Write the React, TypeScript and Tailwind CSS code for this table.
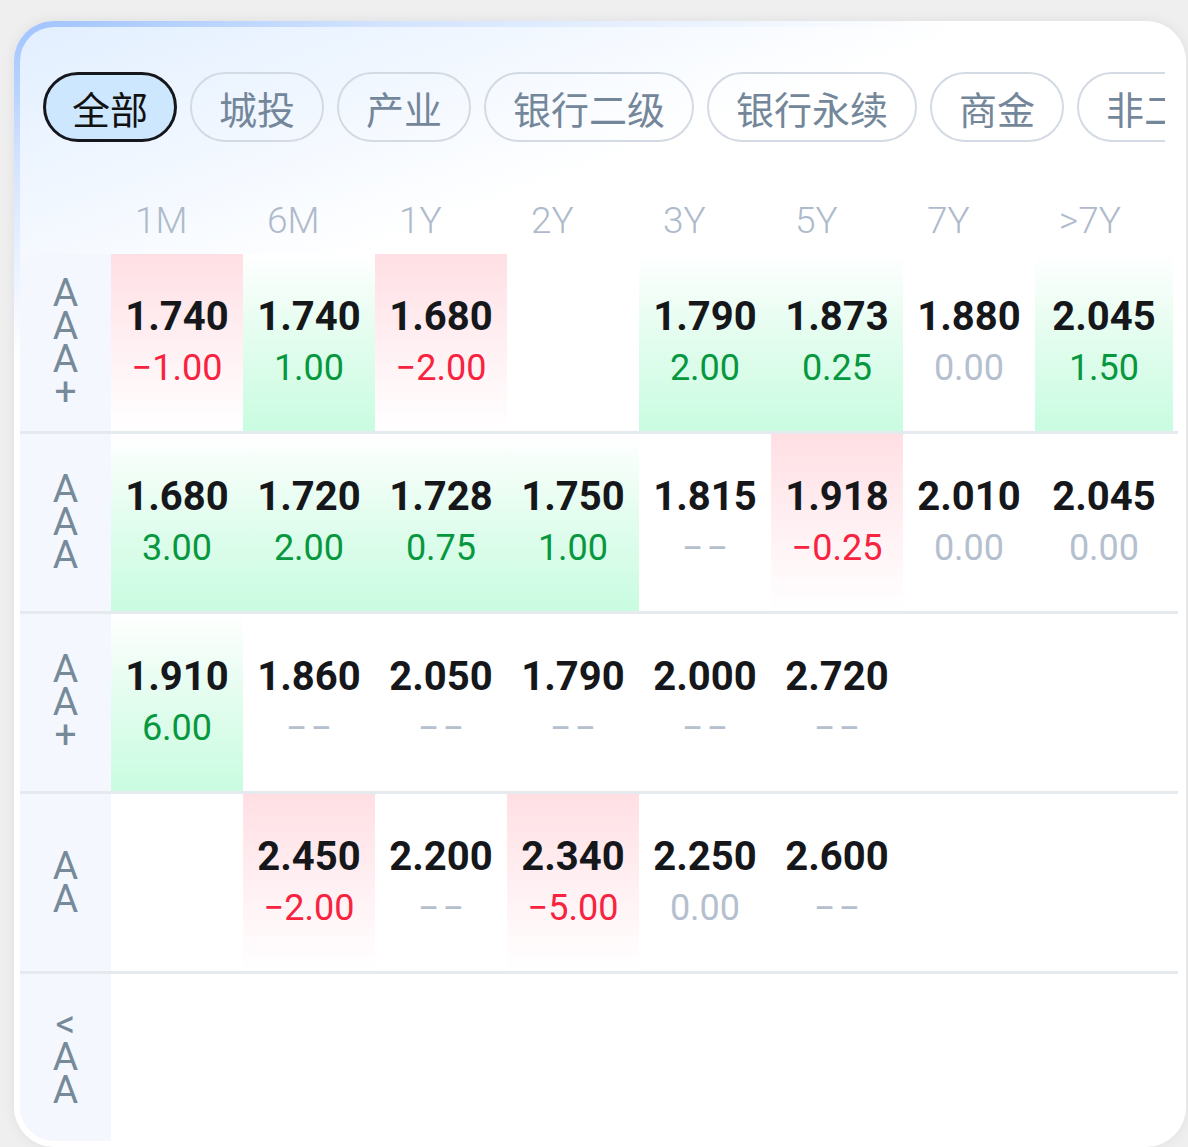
import React from "react";

type Kind = "r" | "g" | "z" | "n";
type Cell = { v: string; d: string; k: Kind } | null;

const tabs = ["全部", "城投", "产业", "银行二级", "银行永续", "商金", "非二永续"];
const heads = ["1M", "6M", "1Y", "2Y", "3Y", "5Y", "7Y", ">7Y"];

const D = "−−";

const rows: { label: string[]; cells: Cell[] }[] = [
  {
    label: ["A", "A", "A", "+"],
    cells: [
      { v: "1.740", d: "−1.00", k: "r" },
      { v: "1.740", d: "1.00", k: "g" },
      { v: "1.680", d: "−2.00", k: "r" },
      null,
      { v: "1.790", d: "2.00", k: "g" },
      { v: "1.873", d: "0.25", k: "g" },
      { v: "1.880", d: "0.00", k: "z" },
      { v: "2.045", d: "1.50", k: "g" },
    ],
  },
  {
    label: ["A", "A", "A"],
    cells: [
      { v: "1.680", d: "3.00", k: "g" },
      { v: "1.720", d: "2.00", k: "g" },
      { v: "1.728", d: "0.75", k: "g" },
      { v: "1.750", d: "1.00", k: "g" },
      { v: "1.815", d: D, k: "n" },
      { v: "1.918", d: "−0.25", k: "r" },
      { v: "2.010", d: "0.00", k: "z" },
      { v: "2.045", d: "0.00", k: "z" },
    ],
  },
  {
    label: ["A", "A", "+"],
    cells: [
      { v: "1.910", d: "6.00", k: "g" },
      { v: "1.860", d: D, k: "n" },
      { v: "2.050", d: D, k: "n" },
      { v: "1.790", d: D, k: "n" },
      { v: "2.000", d: D, k: "n" },
      { v: "2.720", d: D, k: "n" },
      null,
      null,
    ],
  },
  {
    label: ["A", "A"],
    cells: [
      null,
      { v: "2.450", d: "−2.00", k: "r" },
      { v: "2.200", d: D, k: "n" },
      { v: "2.340", d: "−5.00", k: "r" },
      { v: "2.250", d: "0.00", k: "z" },
      { v: "2.600", d: D, k: "n" },
      null,
      null,
    ],
  },
  {
    label: ["<", "A", "A"],
    cells: [null, null, null, null, null, null, null, null],
  },
];

function bgFor(k: Kind | undefined) {
  if (k === "r") return "bg-[linear-gradient(180deg,#ffdfe4_0%,#ffeef1_45%,#ffffff_100%)]";
  if (k === "g") return "bg-[linear-gradient(180deg,#ffffff_0%,#e4fdef_45%,#c9fce1_100%)]";
  return "";
}

function colorFor(k: Kind) {
  if (k === "r") return "text-[#f7233f]";
  if (k === "g") return "text-[#07983f]";
  return "text-[#b5c0cf]";
}

function DataCell({ cell, last }: { cell: Cell; last: boolean }) {
  const w = last ? "w-[138px]" : "w-[132px]";
  return (
    <div className={`${w} shrink-0 h-full flex flex-col items-center justify-center ${bgFor(cell?.k)}`}>
      {cell && (
        <>
          <div className="text-[40px] leading-[50px] font-bold text-[#16171b]">{cell.v}</div>
          <div
            className={`leading-[52px] ${colorFor(cell.k)} ${
              cell.d === D ? "text-[38px] tracking-[3px] pl-[3px]" : "text-[36px]"
            }`}
          >
            {cell.d}
          </div>
        </>
      )}
    </div>
  );
}

export default function App() {
  return (
    <div
      className="w-[1188px] h-[1147px] overflow-hidden bg-[#efefef] pt-[21px] pl-[14px]"
      style={{ fontFamily: "Roboto, 'Noto Sans CJK SC', sans-serif" }}
    >
      <div className="w-[1172px] h-[1126px] rounded-[40px] p-[6px] bg-[linear-gradient(160deg,#9ec2ff_0%,#d3e4ff_9%,#ffffff_22%)] shadow-[0_0_14px_rgba(0,0,0,0.07)]">
        <div className="h-full rounded-[34px] bg-[linear-gradient(160deg,#e2efff_0%,#f1f7ff_12%,#ffffff_23%)] overflow-hidden flex flex-col">
          {/* tabs */}
          <div className="pt-[45px] pl-[23px] pr-[15px]">
            <div className="flex gap-[13px] overflow-hidden">
              {tabs.map((t, i) =>
                i === 0 ? (
                  <div
                    key={t}
                    className="shrink-0 h-[70px] px-[26px] flex items-center rounded-full border-[3px] border-[#15171c] bg-[#cde7ff] text-[38px] text-[#111] whitespace-nowrap"
                    style={{ fontFamily: "'Noto Sans CJK SC', sans-serif" }}
                  >
                    {t}
                  </div>
                ) : (
                  <div
                    key={t}
                    className="shrink-0 h-[70px] px-[27px] flex items-center rounded-full border-2 border-[#d3dae3] text-[38px] text-[#74879a] whitespace-nowrap"
                    style={{ fontFamily: "'Noto Sans CJK SC', sans-serif" }}
                  >
                    {t}
                  </div>
                )
              )}
            </div>
          </div>

          {/* header */}
          <div className="h-[112px] flex items-end pb-[13px]">
            <div className="w-[91px] shrink-0" />
            {heads.map((h, i) => (
              <div
                key={h}
                className={`${i === 7 ? "w-[138px]" : "w-[132px]"} shrink-0 pl-[24px] text-[37px] leading-[40px] font-light text-[#aebacb]`}
              >
                {h}
              </div>
            ))}
          </div>

          {/* rows */}
          <div className="flex-1 flex flex-col">
            {rows.map((r, ri) => (
              <div
                key={ri}
                className={`w-[1158px] flex ${ri === rows.length - 1 ? "flex-1" : "h-[180px] border-b-[3px] border-[#e5eaef]"}`}
              >
                <div className="w-[91px] shrink-0 bg-[#f4f8fe] flex flex-col items-center justify-center text-[39px] leading-[33px] font-normal text-[#778a99]">
                  {r.label.map((c, ci) => (
                    <div key={ci}>{c}</div>
                  ))}
                </div>
                {r.cells.map((c, ci) => (
                  <DataCell key={ci} cell={c} last={ci === 7} />
                ))}
              </div>
            ))}
          </div>
        </div>
      </div>
    </div>
  );
}
